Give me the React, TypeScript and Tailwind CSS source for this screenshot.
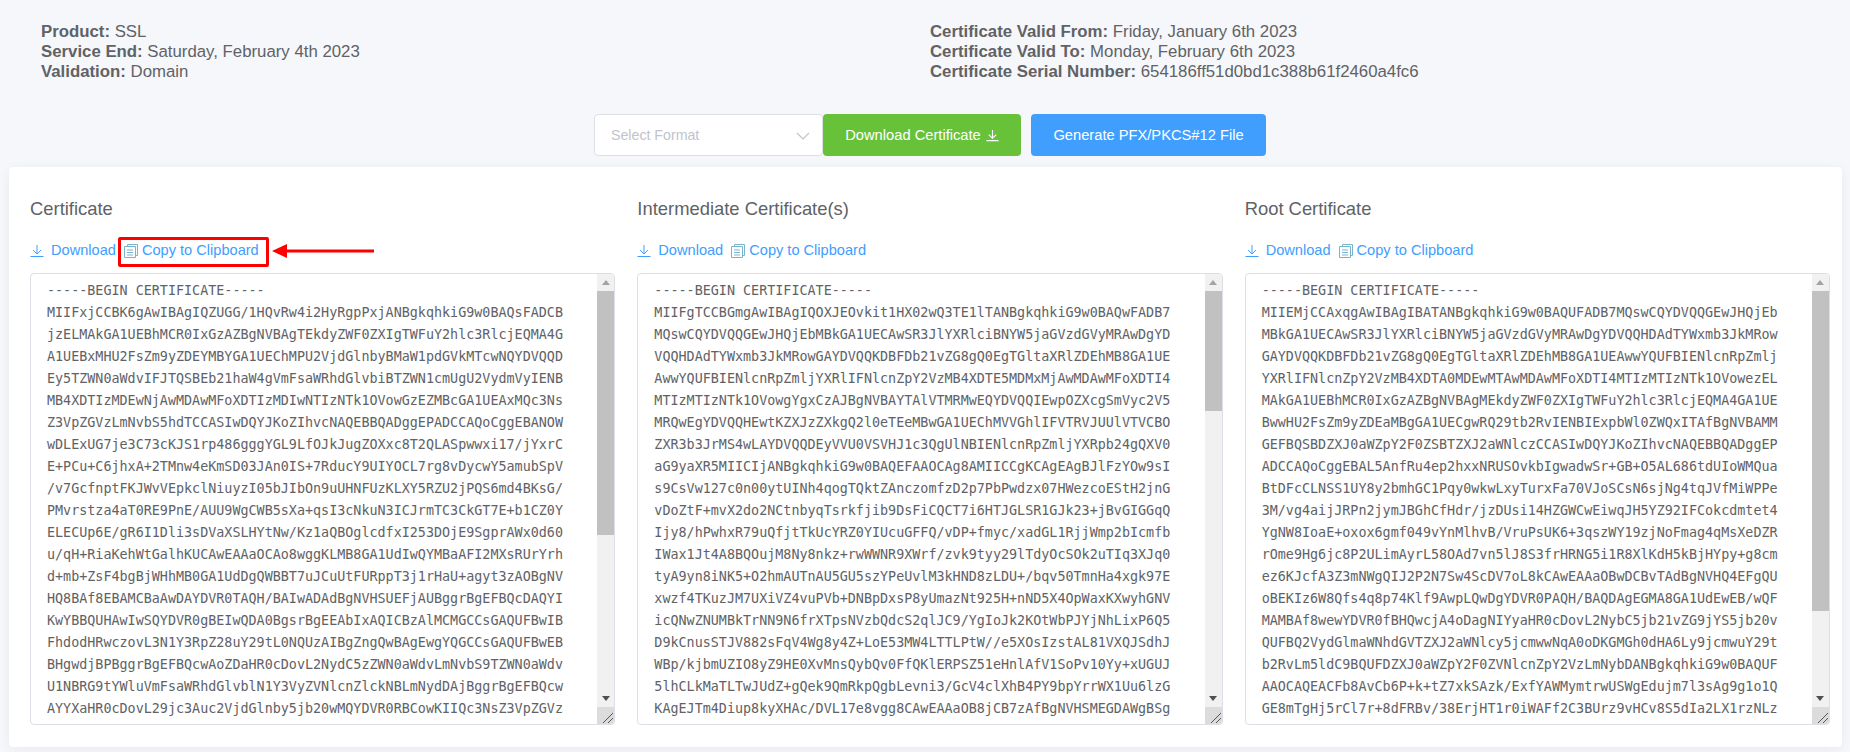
const certificates = [
  {
    title: "Certificate",
    thumbClass: "h-[244px]",
    lines: [
      "-----BEGIN CERTIFICATE-----",
      "MIIFxjCCBK6gAwIBAgIQZUGG/1HQvRw4i2HyRgpPxjANBgkqhkiG9w0BAQsFADCB",
      "jzELMAkGA1UEBhMCR0IxGzAZBgNVBAgTEkdyZWF0ZXIgTWFuY2hlc3RlcjEQMA4G",
      "A1UEBxMHU2FsZm9yZDEYMBYGA1UEChMPU2VjdGlnbyBMaW1pdGVkMTcwNQYDVQQD",
      "Ey5TZWN0aWdvIFJTQSBEb21haW4gVmFsaWRhdGlvbiBTZWN1cmUgU2VydmVyIENB",
      "MB4XDTIzMDEwNjAwMDAwMFoXDTIzMDIwNTIzNTk1OVowGzEZMBcGA1UEAxMQc3Ns",
      "Z3VpZGVzLmNvbS5hdTCCASIwDQYJKoZIhvcNAQEBBQADggEPADCCAQoCggEBANOW",
      "wDLExUG7je3C73cKJS1rp486gggYGL9LfOJkJugZOXxc8T2QLASpwwxi17/jYxrC",
      "E+PCu+C6jhxA+2TMnw4eKmSD03JAn0IS+7RducY9UIYOCL7rg8vDycwY5amubSpV",
      "/v7GcfnptFKJWvVEpkclNiuyzI05bJIbOn9uUHNFUzKLXY5RZU2jPQS6md4BKsG/",
      "PMvrstza4aT0RE9PnE/AUU9WgCWB5sXa+qsI3cNkuN3ICJrmTC3CkGT7E+b1CZ0Y",
      "ELECUp6E/gR6I1Dli3sDVaXSLHYtNw/Kz1aQBOglcdfxI253DOjE9SgprAWx0d60",
      "u/qH+RiaKehWtGalhKUCAwEAAaOCAo8wggKLMB8GA1UdIwQYMBaAFI2MXsRUrYrh",
      "d+mb+ZsF4bgBjWHhMB0GA1UdDgQWBBT7uJCuUtFURppT3j1rHaU+agyt3zAOBgNV",
      "HQ8BAf8EBAMCBaAwDAYDVR0TAQH/BAIwADAdBgNVHSUEFjAUBggrBgEFBQcDAQYI",
      "KwYBBQUHAwIwSQYDVR0gBEIwQDA0BgsrBgEEAbIxAQICBzAlMCMGCCsGAQUFBwIB",
      "FhdodHRwczovL3N1Y3RpZ28uY29tL0NQUzAIBgZngQwBAgEwgYQGCCsGAQUFBwEB",
      "BHgwdjBPBggrBgEFBQcwAoZDaHR0cDovL2NydC5zZWN0aWdvLmNvbS9TZWN0aWdv",
      "U1NBRG9tYWluVmFsaWRhdGlvblN1Y3VyZVNlcnZlckNBLmNydDAjBggrBgEFBQcw",
      "AYYXaHR0cDovL29jc3Auc2VjdGlnby5jb20wMQYDVR0RBCowKIIQc3NsZ3VpZGVz",
    ],
  },
  {
    title: "Intermediate Certificate(s)",
    thumbClass: "h-[120px]",
    lines: [
      "-----BEGIN CERTIFICATE-----",
      "MIIFgTCCBGmgAwIBAgIQOXJEOvkit1HX02wQ3TE1lTANBgkqhkiG9w0BAQwFADB7",
      "MQswCQYDVQQGEwJHQjEbMBkGA1UECAwSR3JlYXRlciBNYW5jaGVzdGVyMRAwDgYD",
      "VQQHDAdTYWxmb3JkMRowGAYDVQQKDBFDb21vZG8gQ0EgTGltaXRlZDEhMB8GA1UE",
      "AwwYQUFBIENlcnRpZmljYXRlIFNlcnZpY2VzMB4XDTE5MDMxMjAwMDAwMFoXDTI4",
      "MTIzMTIzNTk1OVowgYgxCzAJBgNVBAYTAlVTMRMwEQYDVQQIEwpOZXcgSmVyc2V5",
      "MRQwEgYDVQQHEwtKZXJzZXkgQ2l0eTEeMBwGA1UEChMVVGhlIFVTRVJUUlVTVCBO",
      "ZXR3b3JrMS4wLAYDVQQDEyVVU0VSVHJ1c3QgUlNBIENlcnRpZmljYXRpb24gQXV0",
      "aG9yaXR5MIICIjANBgkqhkiG9w0BAQEFAAOCAg8AMIICCgKCAgEAgBJlFzYOw9sI",
      "s9CsVw127c0n00ytUINh4qogTQktZAnczomfzD2p7PbPwdzx07HWezcoEStH2jnG",
      "vDoZtF+mvX2do2NCtnbyqTsrkfjib9DsFiCQCT7i6HTJGLSR1GJk23+jBvGIGGqQ",
      "Ijy8/hPwhxR79uQfjtTkUcYRZ0YIUcuGFFQ/vDP+fmyc/xadGL1RjjWmp2bIcmfb",
      "IWax1Jt4A8BQOujM8Ny8nkz+rwWWNR9XWrf/zvk9tyy29lTdyOcSOk2uTIq3XJq0",
      "tyA9yn8iNK5+O2hmAUTnAU5GU5szYPeUvlM3kHND8zLDU+/bqv50TmnHa4xgk97E",
      "xwzf4TKuzJM7UXiVZ4vuPVb+DNBpDxsP8yUmazNt925H+nND5X4OpWaxKXwyhGNV",
      "icQNwZNUMBkTrNN9N6frXTpsNVzbQdcS2qlJC9/YgIoJk2KOtWbPJYjNhLixP6Q5",
      "D9kCnusSTJV882sFqV4Wg8y4Z+LoE53MW4LTTLPtW//e5XOsIzstAL81VXQJSdhJ",
      "WBp/kjbmUZIO8yZ9HE0XvMnsQybQv0FfQKlERPSZ51eHnlAfV1SoPv10Yy+xUGUJ",
      "5lhCLkMaTLTwJUdZ+gQek9QmRkpQgbLevni3/GcV4clXhB4PY9bpYrrWX1Uu6lzG",
      "KAgEJTm4Diup8kyXHAc/DVL17e8vgg8CAwEAAaOB8jCB7zAfBgNVHSMEGDAWgBSg",
    ],
  },
  {
    title: "Root Certificate",
    thumbClass: "h-[320px]",
    lines: [
      "-----BEGIN CERTIFICATE-----",
      "MIIEMjCCAxqgAwIBAgIBATANBgkqhkiG9w0BAQUFADB7MQswCQYDVQQGEwJHQjEb",
      "MBkGA1UECAwSR3JlYXRlciBNYW5jaGVzdGVyMRAwDgYDVQQHDAdTYWxmb3JkMRow",
      "GAYDVQQKDBFDb21vZG8gQ0EgTGltaXRlZDEhMB8GA1UEAwwYQUFBIENlcnRpZmlj",
      "YXRlIFNlcnZpY2VzMB4XDTA0MDEwMTAwMDAwMFoXDTI4MTIzMTIzNTk1OVowezEL",
      "MAkGA1UEBhMCR0IxGzAZBgNVBAgMEkdyZWF0ZXIgTWFuY2hlc3RlcjEQMA4GA1UE",
      "BwwHU2FsZm9yZDEaMBgGA1UECgwRQ29tb2RvIENBIExpbWl0ZWQxITAfBgNVBAMM",
      "GEFBQSBDZXJ0aWZpY2F0ZSBTZXJ2aWNlczCCASIwDQYJKoZIhvcNAQEBBQADggEP",
      "ADCCAQoCggEBAL5AnfRu4ep2hxxNRUSOvkbIgwadwSr+GB+O5AL686tdUIoWMQua",
      "BtDFcCLNSS1UY8y2bmhGC1Pqy0wkwLxyTurxFa70VJoSCsN6sjNg4tqJVfMiWPPe",
      "3M/vg4aijJRPn2jymJBGhCfHdr/jzDUsi14HZGWCwEiwqJH5YZ92IFCokcdmtet4",
      "YgNW8IoaE+oxox6gmf049vYnMlhvB/VruPsUK6+3qszWY19zjNoFmag4qMsXeDZR",
      "rOme9Hg6jc8P2ULimAyrL58OAd7vn5lJ8S3frHRNG5i1R8XlKdH5kBjHYpy+g8cm",
      "ez6KJcfA3Z3mNWgQIJ2P2N7Sw4ScDV7oL8kCAwEAAaOBwDCBvTAdBgNVHQ4EFgQU",
      "oBEKIz6W8Qfs4q8p74Klf9AwpLQwDgYDVR0PAQH/BAQDAgEGMA8GA1UdEwEB/wQF",
      "MAMBAf8wewYDVR0fBHQwcjA4oDagNIYyaHR0cDovL2NybC5jb21vZG9jYS5jb20v",
      "QUFBQ2VydGlmaWNhdGVTZXJ2aWNlcy5jcmwwNqA0oDKGMGh0dHA6Ly9jcmwuY29t",
      "b2RvLm5ldC9BQUFDZXJ0aWZpY2F0ZVNlcnZpY2VzLmNybDANBgkqhkiG9w0BAQUF",
      "AAOCAQEACFb8AvCb6P+k+tZ7xkSAzk/ExfYAWMymtrwUSWgEdujm7l3sAg9g1o1Q",
      "GE8mTgHj5rCl7r+8dFRBv/38ErjHT1r0iWAFf2C3BUrz9vHCv8S5dIa2LX1rzNLz",
    ],
  },
];

function DownloadIcon() {
  return (
    <svg viewBox="0 0 14 14" className="h-[14px] w-[14px] shrink-0" fill="none" stroke="#409eff" strokeWidth="1">
      <path d="M0.5 12.5h13M7 1v8.5M3 6l4 4 4-4" />
    </svg>
  );
}

function CopyIcon() {
  return (
    <svg viewBox="0 0 14 14" className="h-[14px] w-[14px] shrink-0" fill="none" stroke="#7ab4cc" strokeWidth="1">
      <path d="M3.5 2.5V0.5h10v11h-2" />
      <path d="M0.5 2.5h11v11h-11z" />
      <path d="M3 6h6M3 8.5h6M3 11h6" />
    </svg>
  );
}

function Scrollbar({ thumbClass }: { thumbClass: string }) {
  return (
    <div className="flex w-[17px] shrink-0 flex-col bg-[#f1f1f1]">
      <div className="flex h-[17px] items-center justify-center">
        <svg viewBox="0 0 8 5" className="h-[5px] w-[8px]" fill="#a3a3a3">
          <path d="M4 0l4 5H0z" />
        </svg>
      </div>
      <div className="flex-1">
        <div className={`${thumbClass} bg-[#c1c1c1]`} />
      </div>
      <div className="flex h-[17px] items-center justify-center">
        <svg viewBox="0 0 8 5" className="h-[5px] w-[8px]" fill="#505050">
          <path d="M0 0h8L4 5z" />
        </svg>
      </div>
      <div className="flex h-[17px] items-end justify-end bg-[#dcdcdc]">
        <svg viewBox="0 0 15 15" className="h-[15px] w-[15px]" fill="none" stroke="#555">
          <path d="M4 14L14 4M9 14l5-5" />
        </svg>
      </div>
    </div>
  );
}

function CertificateColumn({ cert, highlight }: { cert: (typeof certificates)[number]; highlight?: boolean }) {
  return (
    <div className="flex min-w-0 flex-col">
      <h3 className="text-[18.4px] leading-[20px] text-[#606266]">{cert.title}</h3>
      <div className="relative mt-[22px] flex h-[20px] items-center gap-[8px] text-[14.6px] text-[#409eff]">
        <span className="flex items-center gap-[7px]">
          <DownloadIcon />
          Download
        </span>
        <span className="flex items-center gap-[4px]">
          <CopyIcon />
          Copy to Clipboard
        </span>
        {highlight && (
          <>
            <div className="absolute left-[88px] top-[-4px] h-[30px] w-[151px] rounded-[2px] border-[3px] border-[#f00]" />
            <svg viewBox="0 0 102 16" className="absolute left-[242px] top-[2px] h-[16px] w-[102px]">
              <path d="M0 8l15-7v5.5h87v3H15V15z" fill="#f00" />
            </svg>
          </>
        )}
      </div>
      <div className="mt-[12px] flex h-[452px] overflow-hidden rounded-[4px] border border-[#dcdfe6] bg-white">
        <div className="min-w-0 flex-1 overflow-hidden pl-[16px] pt-[6px] font-['DejaVu_Sans_Mono',monospace] text-[13.4px] leading-[22px] whitespace-pre text-[#606266]">
          {cert.lines.map((line, i) => (
            <div key={i}>{line}</div>
          ))}
        </div>
        <Scrollbar thumbClass={cert.thumbClass} />
      </div>
    </div>
  );
}

export default function App() {
  return (
    <div className="flex h-[752px] flex-col overflow-hidden bg-[#f5f7fa] font-['Liberation_Sans',Arial,sans-serif] text-[#606266]">
      <div className="flex h-[114px] pl-[41px] pt-[22px] text-[16.8px] leading-[20px]">
        <div className="w-[889px]">
          <div><b>Product:</b> SSL</div>
          <div><b>Service End:</b> Saturday, February 4th 2023</div>
          <div><b>Validation:</b> Domain</div>
        </div>
        <div>
          <div><b>Certificate Valid From:</b> Friday, January 6th 2023</div>
          <div><b>Certificate Valid To:</b> Monday, February 6th 2023</div>
          <div><b>Certificate Serial Number:</b> 654186ff51d0bd1c388b61f2460a4fc6</div>
        </div>
      </div>

      <div className="flex h-[42px] pl-[594px] text-[14.7px] text-white">
        <div className="flex w-[229px] items-center justify-between rounded-[4px] border border-[#dcdfe6] bg-white pl-[16px] pr-[12px] pt-[1px] text-[14.2px] text-[#c0c4cc]">
          Select Format
          <svg viewBox="0 0 14 8" className="h-[8px] w-[14px]" fill="none" stroke="#c0c4cc" strokeWidth="1.2">
            <path d="M1 1l6 6 6-6" />
          </svg>
        </div>
        <div className="flex w-[198px] items-center justify-center gap-[5px] rounded-[4px] bg-[#67c23a]">
          Download Certificate
          <svg viewBox="0 0 14 14" className="h-[13px] w-[13px]" fill="none" stroke="#fff" strokeWidth="1.2">
            <path d="M0.5 12.5h13M7 1v8.5M3 6l4 4 4-4" />
          </svg>
        </div>
        <div className="ml-[10px] flex w-[235px] items-center justify-center rounded-[4px] bg-[#409eff]">
          Generate PFX/PKCS#12 File
        </div>
      </div>

      <div className="ml-[9px] mr-[8px] mt-[11px] grid h-[580px] grid-cols-3 gap-[22px] rounded-[4px] bg-white pl-[21px] pr-[12px] pt-[32px] shadow-[0_2px_12px_0_rgba(0,0,0,0.06)]">
        {certificates.map((cert, i) => (
          <CertificateColumn key={cert.title} cert={cert} highlight={i === 0} />
        ))}
      </div>
    </div>
  );
}
